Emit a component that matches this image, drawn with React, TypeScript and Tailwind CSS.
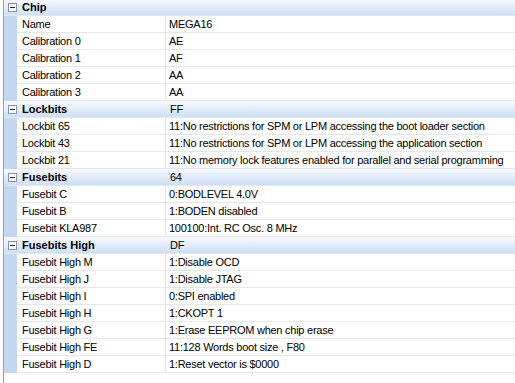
import React from "react";

type Row = { name: string; value: string; header?: boolean };

const rows: Row[] = [
  { name: "Chip", value: "", header: true },
  { name: "Name", value: "MEGA16" },
  { name: "Calibration 0", value: "AE" },
  { name: "Calibration 1", value: "AF" },
  { name: "Calibration 2", value: "AA" },
  { name: "Calibration 3", value: "AA" },
  { name: "Lockbits", value: "FF", header: true },
  { name: "Lockbit 65", value: "11:No restrictions for SPM or LPM accessing the boot loader section" },
  { name: "Lockbit 43", value: "11:No restrictions for SPM or LPM accessing the application section" },
  { name: "Lockbit 21", value: "11:No memory lock features enabled for parallel and serial programming" },
  { name: "Fusebits", value: "64", header: true },
  { name: "Fusebit C", value: "0:BODLEVEL 4.0V" },
  { name: "Fusebit B", value: "1:BODEN disabled" },
  { name: "Fusebit KLA987", value: "100100:Int. RC Osc. 8 MHz" },
  { name: "Fusebits High", value: "DF", header: true },
  { name: "Fusebit High M", value: "1:Disable OCD" },
  { name: "Fusebit High J", value: "1:Disable JTAG" },
  { name: "Fusebit High I", value: "0:SPI enabled" },
  { name: "Fusebit High H", value: "1:CKOPT 1" },
  { name: "Fusebit High G", value: "1:Erase EEPROM when chip erase" },
  { name: "Fusebit High FE", value: "11:128 Words boot size , F80" },
  { name: "Fusebit High D", value: "1:Reset vector is $0000" },
];

function MinusBox() {
  return (
    <div className="w-[9px] h-[9px] border border-[#8a96a8] bg-white flex items-center justify-center">
      <div className="w-[5px] h-px bg-[#1c2a44]" />
    </div>
  );
}

export default function App() {
  return (
    <div
      className="w-[515px] h-[383px] bg-white flex text-[11px] leading-none tracking-[-0.25px] text-black overflow-hidden"
      style={{ fontFamily: '"Liberation Sans", Arial, sans-serif' }}
    >
      <div className="w-[3px] shrink-0 bg-white" />
      <div className="w-px shrink-0 bg-[#9aa3ad]" />
      <div className="flex-1 flex flex-col">
        {rows.map((r, i) => {
          const h = i === 0 ? "h-[16px]" : "h-[17px]";
          if (r.header) {
            return (
              <div
                key={i}
                className={`${h} flex items-stretch bg-gradient-to-b from-[#f7f9fd] to-[#cfdff5] border-b border-[#e2e8f0]`}
              >
                <div className="w-[13px] shrink-0 flex items-center justify-center pl-[3px]">
                  <MinusBox />
                </div>
                <div className="w-[149px] shrink-0 flex items-center pl-[5px] font-bold tracking-normal">
                  {r.name}
                </div>
                <div className="flex-1 flex items-center pl-[4px]">{r.value}</div>
              </div>
            );
          }
          return (
            <div key={i} className={`${h} flex items-stretch`}>
              <div className="w-[13px] shrink-0 bg-[#c5d7ef]" />
              <div className="flex-1 flex border-b border-[#e4e6ea]">
                <div className="w-[149px] shrink-0 flex items-center pl-[5px] border-r border-[#e4e6ea]">
                  {r.name}
                </div>
                <div className="flex-1 flex items-center pl-[3px] whitespace-nowrap">{r.value}</div>
              </div>
            </div>
          );
        })}
      </div>
    </div>
  );
}
